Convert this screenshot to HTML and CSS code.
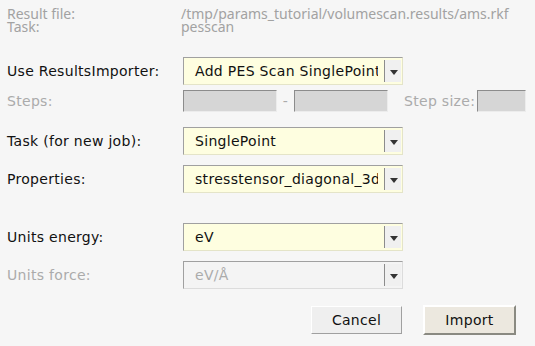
FILE: index.html
```html
<!DOCTYPE html>
<html lang="en">
<head>
    <meta charset="UTF-8">
    <title>Import results</title>
    <link rel="stylesheet" href="styles.css">
</head>
<body>
    <div class="dialog">
        <div class="info">
            <span class="info-label">Result file:</span>
            <span>/tmp/params_tutorial/volumescan.results/ams.rkf</span>
            <span class="info-label">Task:</span>
            <span>pesscan</span>
        </div>

        <div class="row row-importer">
            <label>Use ResultsImporter:</label>
            <div class="combo">
                <span class="combo-text">Add PES Scan SinglePoint</span>
                <span class="combo-arrow"></span>
            </div>
        </div>

        <div class="row row-steps">
            <label class="disabled">Steps:</label>
            <div class="field wide"></div>
            <span class="dash">-</span>
            <div class="field wide"></div>
            <span class="step-size">Step size:</span>
            <div class="field narrow"></div>
        </div>

        <div class="row row-task">
            <label>Task (for new job):</label>
            <div class="combo">
                <span class="combo-text">SinglePoint</span>
                <span class="combo-arrow"></span>
            </div>
        </div>

        <div class="row row-props">
            <label>Properties:</label>
            <div class="combo">
                <span class="combo-text">stresstensor_diagonal_3d</span>
                <span class="combo-arrow"></span>
            </div>
        </div>

        <div class="row row-energy">
            <label>Units energy:</label>
            <div class="combo">
                <span class="combo-text">eV</span>
                <span class="combo-arrow"></span>
            </div>
        </div>

        <div class="row row-force">
            <label class="disabled">Units force:</label>
            <div class="combo combo-disabled">
                <span class="combo-text">eV/Å</span>
                <span class="combo-arrow"></span>
            </div>
        </div>

        <div class="buttons">
            <button class="btn-cancel">Cancel</button>
            <button class="btn-import">Import</button>
        </div>
    </div>
</body>
</html>
```

FILE: styles.css
```css
body {
    margin: 0;
    width: 535px;
    height: 346px;
    background-color: #f6f6f6;
    font-family: "DejaVu Sans", sans-serif;
    font-size: 14px;
    letter-spacing: 0.3px;
    color: #111;
    overflow: hidden;
}
.dialog {
    padding: 7px 19px 0 7px;
}
.info {
    display: grid;
    grid-template-columns: 174px auto;
    font-family: "Noto Sans", sans-serif;
    font-size: 14px;
    letter-spacing: 0;
    line-height: 13px;
    color: #a2a2a2;
    white-space: nowrap;
}
.row {
    display: flex;
    align-items: center;
    height: 28px;
    white-space: nowrap;
}
.row label {
    width: 176px;
    flex: none;
}
.disabled {
    color: #ababab;
}
.row-importer {
    margin-top: 24px;
}
.row-steps {
    height: 22px;
    margin-top: 5px;
    color: #ababab;
}
.row-task {
    margin-top: 15px;
}
.row-props {
    margin-top: 10px;
}
.row-energy {
    margin-top: 30px;
}
.row-force {
    margin-top: 10px;
}
.combo {
    display: flex;
    align-items: stretch;
    width: 220px;
    height: 28px;
    flex: none;
    box-sizing: border-box;
    background-color: #fefee0;
    border: 1px solid #e4e4c8;
    border-top-color: #a0a0a0;
    border-left-color: #a0a0a0;
}
.combo-text {
    flex: 1;
    overflow: hidden;
    white-space: nowrap;
    padding-left: 11px;
    margin-right: 6px;
    line-height: 26px;
}
.combo-arrow {
    width: 16px;
    flex: none;
    margin: 2px 1px 2px 0;
    border-left: 1px solid #8c8c8c;
    background-color: #f0f0f0;
    position: relative;
}
.combo-arrow::after {
    content: "";
    position: absolute;
    left: 5px;
    top: 10px;
    border-left: 4px solid transparent;
    border-right: 4px solid transparent;
    border-top: 5px solid #333;
}
.combo-disabled {
    background-color: #f4f4f4;
    border-color: #dcdcdc;
    border-top-color: #a0a0a0;
    border-left-color: #a0a0a0;
}
.combo-disabled .combo-text {
    color: #ababab;
}
.field {
    height: 22px;
    flex: none;
    box-sizing: border-box;
    background-color: #d6d6d6;
    border: 1px solid #ececec;
    border-top-color: #8c8c8c;
    border-left-color: #8c8c8c;
}
.wide {
    width: 94px;
}
.narrow {
    width: 49px;
}
.dash {
    width: 17px;
    flex: none;
    text-align: center;
}
.step-size {
    flex: none;
    margin-left: 16px;
    margin-right: 2px;
}
.buttons {
    display: flex;
    justify-content: flex-end;
    align-items: center;
    gap: 21px;
    margin-top: 16px;
}
button {
    font-family: "DejaVu Sans", sans-serif;
    font-size: 14px;
    letter-spacing: 0.3px;
    color: #111;
    padding: 0;
    box-sizing: border-box;
}
.btn-cancel {
    width: 91px;
    height: 28px;
    background-color: #efefef;
    border: 1px solid #a0a0a0;
    border-top-color: #fff;
    border-left-color: #fff;
}
.btn-import {
    width: 93px;
    height: 30px;
    background-color: #ece8df;
    border: 2px solid #8a8a82;
    border-top-color: #fff;
    border-left-color: #fff;
}
```
